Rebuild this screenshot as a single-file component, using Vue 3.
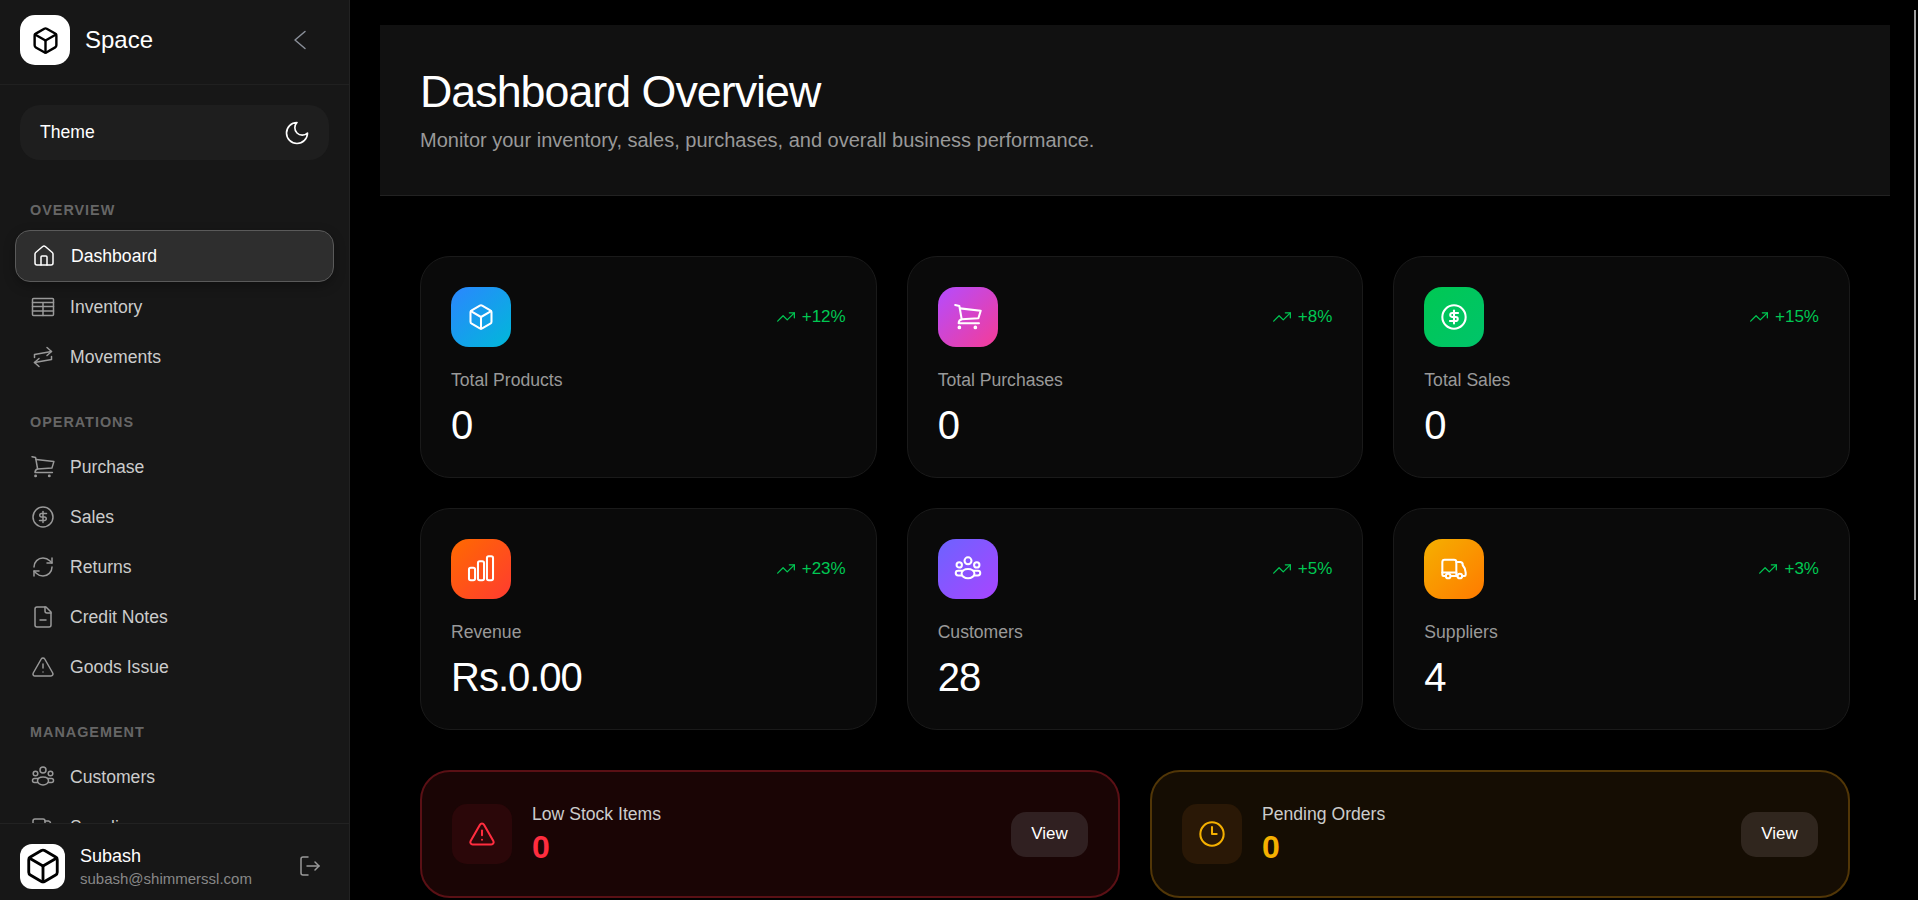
<template>
  <div class="app">
    <aside class="sidebar">
      <div class="brand">
        <div class="brand-logo">
          <svg width="29" height="29" viewBox="0 0 24 24" class="ic" stroke="#000" stroke-width="2"><path d="M21 8a2 2 0 0 0-1-1.73l-7-4a2 2 0 0 0-2 0l-7 4A2 2 0 0 0 3 8v8a2 2 0 0 0 1 1.73l7 4a2 2 0 0 0 2 0l7-4A2 2 0 0 0 21 16Z"/><path d="m3.3 7 8.7 5 8.7-5"/><path d="M12 22V12"/></svg>
        </div>
        <span class="brand-name">Space</span>
        <svg class="ic collapse" width="24" height="24" viewBox="0 0 24 24" stroke="#8a8f99" stroke-width="1.5"><path d="m17 3.500-10 8.500 10 8.500"/></svg>
      </div>

      <div class="theme-row">
        <span>Theme</span>
        <svg class="ic" width="28" height="28" viewBox="0 0 24 24" stroke="#fff" stroke-width="1.4"><path d="M12 3a6 6 0 0 0 9 9 9 9 0 1 1-9-9Z"/></svg>
      </div>

      <nav class="nav">
        <template v-for="group in navGroups" :key="group.title">
          <div class="nav-title">{{ group.title }}</div>
          <a v-for="item in group.items" :key="item.label" class="nav-item" :class="{ active: item.active }">
            <svg class="ic" width="24" height="24" viewBox="0 0 24 24" stroke-width="1.5" v-html="icons[item.icon]"></svg>
            <span>{{ item.label }}</span>
          </a>
        </template>
      </nav>

      <div class="user">
        <div class="avatar">
          <svg width="38" height="38" viewBox="0 0 24 24" class="ic" stroke="#000" stroke-width="1.8"><path d="M21 8a2 2 0 0 0-1-1.73l-7-4a2 2 0 0 0-2 0l-7 4A2 2 0 0 0 3 8v8a2 2 0 0 0 1 1.73l7 4a2 2 0 0 0 2 0l7-4A2 2 0 0 0 21 16Z"/><path d="m3.3 7 8.7 5 8.7-5"/><path d="M12 22V12"/></svg>
        </div>
        <div class="user-info">
          <div class="user-name">Subash</div>
          <div class="user-mail">subash@shimmerssl.com</div>
        </div>
        <svg class="ic logout" width="24" height="24" viewBox="0 0 24 24" stroke="#9a9a9a" stroke-width="1.5"><path d="M11 21H6a2 2 0 0 1-2-2V5a2 2 0 0 1 2-2h5"/><path d="m18 16 4-4-4-4"/><path d="M22 12H10"/></svg>
      </div>
    </aside>

    <main class="main">
      <header class="page-head">
        <h1>Dashboard Overview</h1>
        <p>Monitor your inventory, sales, purchases, and overall business performance.</p>
      </header>

      <div class="content">
        <section class="stats">
          <div v-for="s in stats" :key="s.label" class="stat">
            <div class="stat-top">
              <div class="stat-icon" :class="s.tone">
                <svg class="ic" width="28" height="28" viewBox="0 0 24 24" stroke="#fff" stroke-width="1.75" v-html="icons[s.icon]"></svg>
              </div>
              <div class="trend">
                <svg class="ic" width="20" height="20" viewBox="0 0 24 24" stroke="#00c853" stroke-width="1.5"><path d="m22 7-8.5 8.5-5-5L2 17"/><path d="M16 7h6v6"/></svg>
                <span>{{ s.trend }}</span>
              </div>
            </div>
            <div class="stat-label">{{ s.label }}</div>
            <div class="stat-value">{{ s.value }}</div>
          </div>
        </section>

        <section class="alerts">
          <div v-for="a in alerts" :key="a.label" class="alert" :class="a.tone">
            <div class="alert-icon">
              <svg class="ic" width="28" height="28" viewBox="0 0 24 24" stroke="currentColor" stroke-width="1.75" v-html="icons[a.icon]"></svg>
            </div>
            <div class="alert-text">
              <div class="alert-label">{{ a.label }}</div>
              <div class="alert-value">{{ a.value }}</div>
            </div>
            <button class="view-btn">View</button>
          </div>
        </section>
      </div>
    </main>

    <!-- scrollbar thumb of the main pane -->
    <div class="scroll-thumb"></div>
  </div>
</template>

<script setup>
const icons = {
  home: '<path d="M15 21v-8a1 1 0 0 0-1-1h-4a1 1 0 0 0-1 1v8"/><path d="M3 10a2 2 0 0 1 .7-1.5l7-6a2 2 0 0 1 2.6 0l7 6A2 2 0 0 1 21 10v9a2 2 0 0 1-2 2H5a2 2 0 0 1-2-2z"/>',
  table: '<rect x="1.500" y="3.500" width="21" height="17" rx="1"/><path d="M1.500 7.500h21M1.500 11.500h21M1.500 16h21M12 7.500v13"/>',
  swap: '<path d="m16 2.500 4.500 4-4.500 4"/><path d="M20.500 6.500 3.500 9.500v3"/><path d="m8 21.500-4.500-4 4.500-4"/><path d="M3.500 17.500l17-3v-3"/>',
  cart: '<circle cx="4.600" cy="20.900" r="0.700"/><circle cx="18.300" cy="20.900" r="0.700"/><path d="M1 1.700 4.600 2.600 6.600 14C5 14.500 4 15.500 4 17.400H21.400"/><path d="M5.100 4.600 22.900 6.600 20.900 13.100 6.600 14"/>',
  dollar: '<circle cx="12" cy="12" r="10"/><path d="M15.500 8.500h-5a1.750 1.750 0 1 0 0 3.500h3a1.750 1.750 0 1 1 0 3.500h-5"/><path d="M12 17.500v-11"/>',
  refresh: '<path d="M3 12a9 9 0 0 1 9-9 9.75 9.75 0 0 1 6.74 2.74L21 8"/><path d="M21 3v5h-5"/><path d="M21 12a9 9 0 0 1-9 9 9.75 9.75 0 0 1-6.74-2.74L3 16"/><path d="M8 16H3v5"/>',
  file: '<path d="M15 2H6a2 2 0 0 0-2 2v16a2 2 0 0 0 2 2h12a2 2 0 0 0 2-2V7Z"/><path d="M14 2v4a2 2 0 0 0 2 2h4"/><path d="M9 15h6"/>',
  warn: '<path d="m21.73 18-8-14a2 2 0 0 0-3.48 0l-8 14A2 2 0 0 0 4 21h16a2 2 0 0 0 1.73-3"/><path d="M12 9v4"/><path d="M12 17h.01"/>',
  users: '<circle cx="12" cy="5" r="3"/><circle cx="4.500" cy="8.500" r="2.300"/><circle cx="19.500" cy="8.500" r="2.300"/><path d="M6.500 16c0-2.500 2.500-4 5.500-4s5.500 1.500 5.500 4c0 2-2.500 4-5.500 4s-5.500-2-5.500-4Z"/><path d="M7.500 13.500H3.500C2 13.500 1.500 14.500 1.500 15.500S2 17.500 3.500 17.500H6.500"/><path d="M16.500 13.500H20.500C22 13.500 22.500 14.500 22.500 15.500S22 17.500 20.500 17.500H17.500"/>',
  truck: '<path d="M14 18V6a2 2 0 0 0-2-2H4a2 2 0 0 0-2 2v11a1 1 0 0 0 1 1h2"/><path d="M2 15h12"/><path d="M15 18H9"/><path d="M19 18h2a1 1 0 0 0 1-1v-2c0-2-1-4.500-2.500-6.200A2.500 2.500 0 0 0 17.500 6H14"/><circle cx="17" cy="18" r="2"/><circle cx="7" cy="18" r="2"/>',
  box: '<path d="M21 8a2 2 0 0 0-1-1.730l-7-4a2 2 0 0 0-2 0l-7 4A2 2 0 0 0 3 8v8a2 2 0 0 0 1 1.730l7 4a2 2 0 0 0 2 0l7-4A2 2 0 0 0 21 16Z"/><path d="m3.300 7 8.700 5 8.700-5"/><path d="M12 22V12"/>',
  bars: '<rect x="1.700" y="10.900" width="5.200" height="10.800" rx="1.500"/><rect x="9.400" y="5.400" width="5.200" height="16.300" rx="1.500"/><rect x="17.100" y="1.100" width="5.200" height="20.600" rx="1.500"/>',
  clock: '<circle cx="12" cy="12" r="10"/><path d="M12 6v6h4"/>'
}

const navGroups = [
  {
    title: 'OVERVIEW',
    items: [
      { label: 'Dashboard', icon: 'home', active: true },
      { label: 'Inventory', icon: 'table' },
      { label: 'Movements', icon: 'swap' }
    ]
  },
  {
    title: 'OPERATIONS',
    items: [
      { label: 'Purchase', icon: 'cart' },
      { label: 'Sales', icon: 'dollar' },
      { label: 'Returns', icon: 'refresh' },
      { label: 'Credit Notes', icon: 'file' },
      { label: 'Goods Issue', icon: 'warn' }
    ]
  },
  {
    title: 'MANAGEMENT',
    items: [
      { label: 'Customers', icon: 'users' },
      { label: 'Suppliers', icon: 'truck' }
    ]
  }
]

const stats = [
  { label: 'Total Products', value: '0', trend: '+12%', icon: 'box', tone: 'blue' },
  { label: 'Total Purchases', value: '0', trend: '+8%', icon: 'cart', tone: 'pink' },
  { label: 'Total Sales', value: '0', trend: '+15%', icon: 'dollar', tone: 'green' },
  { label: 'Revenue', value: 'Rs.0.00', trend: '+23%', icon: 'bars', tone: 'orange' },
  { label: 'Customers', value: '28', trend: '+5%', icon: 'users', tone: 'violet' },
  { label: 'Suppliers', value: '4', trend: '+3%', icon: 'truck', tone: 'amber' }
]

const alerts = [
  { label: 'Low Stock Items', value: '0', icon: 'warn', tone: 'red' },
  { label: 'Pending Orders', value: '0', icon: 'clock', tone: 'yellow' }
]
</script>

<style>
html, body {
  margin: 0;
  height: 100%;
  overflow: hidden;
  background: #000;
}
</style>

<style scoped>
.app {
  position: relative;
  display: flex;
  height: 900px;
  background: #000;
  color: #fff;
  font-family: "Liberation Sans", Arial, sans-serif;
}

.ic {
  fill: none;
  stroke-linecap: round;
  stroke-linejoin: round;
  flex: none;
}

/* sidebar */
.sidebar {
  width: 349px;
  flex: none;
  display: flex;
  flex-direction: column;
  background: #171717;
  border-right: 1px solid #222;
}

.brand {
  flex: none;
  display: flex;
  align-items: center;
  gap: 15px;
  padding: 15px 20px 19px;
  border-bottom: 1px solid #202020;
}

.brand-logo {
  width: 50px;
  height: 50px;
  border-radius: 15px;
  background: #fff;
  display: flex;
  align-items: center;
  justify-content: center;
}

.brand-name {
  font-size: 24px;
  flex: 1;
}

.collapse {
  margin-right: 17px;
}

.theme-row {
  flex: none;
  height: 55px;
  margin: 20px 20px 0;
  padding: 0 18px 0 20px;
  border-radius: 20px;
  background: #1e1e1e;
  display: flex;
  align-items: center;
  justify-content: space-between;
  font-size: 17.6px;
}

.nav {
  flex: 1;
  min-height: 0;
  overflow: hidden;
  padding: 0 15px;
}

.nav-title {
  margin: 32px 15px 11px;
  font-size: 14.4px;
  line-height: 17px;
  font-weight: 700;
  letter-spacing: 1px;
  color: #666;
}

.nav-title:first-child {
  margin-top: 42px;
}

.nav-item {
  height: 50px;
  box-sizing: border-box;
  display: flex;
  align-items: center;
  gap: 15px;
  padding: 0 16px;
  font-size: 17.6px;
  color: #ccc;
}

.nav-item .ic {
  stroke: #999;
}

.nav-item.active {
  height: 52px;
  border: 1px solid #5a5a5a;
  border-radius: 15px;
  background: #2e2e2e;
  color: #fff;
  box-shadow: 0 4px 12px rgba(0, 0, 0, 0.3);
}

.nav-item.active .ic {
  stroke: #fff;
}

.user {
  height: 77px;
  box-sizing: border-box;
  flex: none;
  display: flex;
  align-items: center;
  gap: 15px;
  padding: 20px 20px 12px;
  border-top: 1px solid #222;
}

.avatar {
  width: 45px;
  height: 45px;
  flex: none;
  border-radius: 12px;
  background: #fff;
  display: flex;
  align-items: center;
  justify-content: center;
}

.user-info {
  flex: 1;
}

.user-name {
  font-size: 18px;
  line-height: 26px;
}

.user-mail {
  font-size: 15px;
  line-height: 20px;
  color: #888;
}

.logout {
  margin-right: 8px;
}

/* main */
.main {
  flex: 1;
  min-width: 0;
  overflow: hidden;
  background: #000;
}

.scroll-thumb {
  position: absolute;
  top: 10px;
  right: 2px;
  width: 2px;
  height: 590px;
  background: #a0a0a0;
}

.page-head {
  margin: 25px 28px 0 30px;
  height: 171px;
  box-sizing: border-box;
  padding: 40px 40px 0;
  background: #111;
  border-bottom: 1px solid #222;
}

.page-head h1 {
  margin: 0;
  font-size: 44.8px;
  line-height: 52px;
  font-weight: 400;
  letter-spacing: -1px;
}

.page-head p {
  margin: 10px 0 0;
  font-size: 20px;
  line-height: 26px;
  color: #999;
}

.content {
  padding: 60px 68px 0 70px;
}

.stats {
  display: grid;
  grid-template-columns: repeat(3, 1fr);
  gap: 30px;
}

.stat {
  height: 222px;
  box-sizing: border-box;
  padding: 30px;
  background: #0a0a0a;
  border: 1px solid #1a1a1a;
  border-radius: 30px;
}

.stat-top {
  display: flex;
  align-items: center;
  justify-content: space-between;
}

.stat-icon {
  width: 60px;
  height: 60px;
  border-radius: 18px;
  display: flex;
  align-items: center;
  justify-content: center;
}

.blue { background: linear-gradient(135deg, #2b86ff, #00b8d9); }
.pink { background: linear-gradient(135deg, #b44cff, #f53c96); }
.green { background: linear-gradient(135deg, #00c853, #00c46a); }
.orange { background: linear-gradient(135deg, #ff6a00, #ff3b30); }
.violet { background: linear-gradient(135deg, #6c63ff, #a845ff); }
.amber { background: linear-gradient(135deg, #f5b000, #ff7a00); }

.trend {
  display: flex;
  align-items: center;
  gap: 6px;
  font-size: 17px;
  color: #00c853;
}

.stat-label {
  margin-top: 22px;
  font-size: 17.6px;
  line-height: 22px;
  color: #999;
}

.stat-value {
  margin-top: 10px;
  font-size: 40px;
  line-height: 48px;
  letter-spacing: -1px;
}

.alerts {
  display: grid;
  grid-template-columns: 1fr 1fr;
  gap: 30px;
  margin-top: 40px;
}

.alert {
  height: 128px;
  box-sizing: border-box;
  padding: 0 30px;
  display: flex;
  align-items: center;
  gap: 20px;
  border: 2px solid;
  border-radius: 30px;
}

.alert.red {
  background: #1a0505;
  border-color: #5a1015;
}

.alert.yellow {
  background: #150d03;
  border-color: #513607;
}

.alert-icon {
  width: 60px;
  height: 60px;
  border-radius: 15px;
  display: flex;
  align-items: center;
  justify-content: center;
}

.red .alert-icon {
  background: #2b0709;
  color: #ff2d3f;
}

.yellow .alert-icon {
  background: #2a1806;
  color: #f5b000;
}

.alert-text {
  flex: 1;
}

.alert-label {
  font-size: 17.6px;
  line-height: 22px;
  color: #ccc;
}

.alert-value {
  margin-top: 4px;
  font-size: 32px;
  line-height: 36px;
  font-weight: 700;
}

.red .alert-value { color: #ff2d3f; }
.yellow .alert-value { color: #f5b000; }

.view-btn {
  width: 77px;
  height: 45px;
  padding: 0;
  border: 0;
  border-radius: 15px;
  color: #fff;
  font: inherit;
  font-size: 17px;
}

.red .view-btn { background: #302021; }
.yellow .view-btn { background: #30261e; }
</style>
